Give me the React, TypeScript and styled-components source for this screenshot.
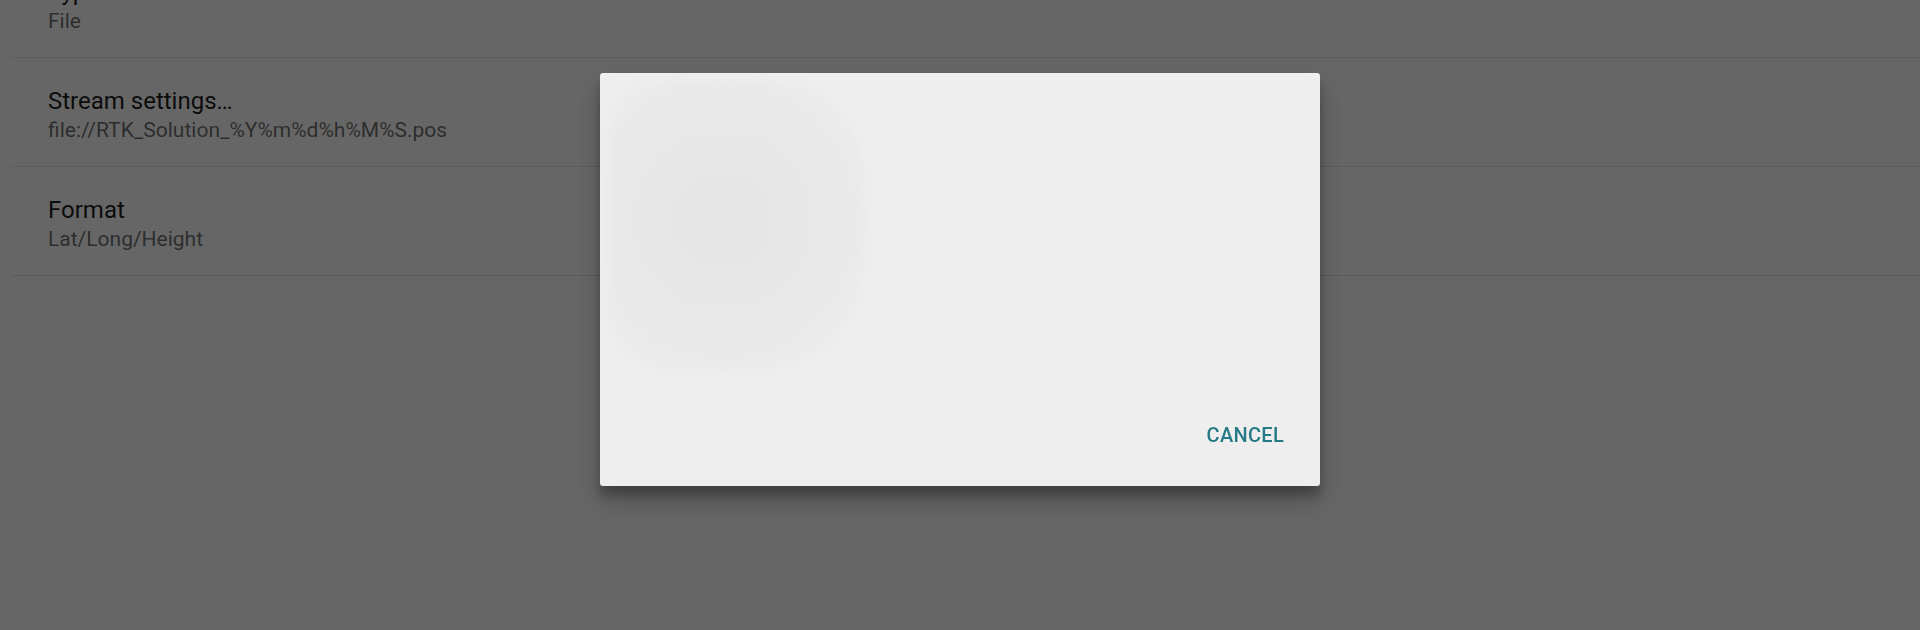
import React, { useEffect, useRef } from "react";
import styled, { createGlobalStyle } from "styled-components";

const GlobalStyle = createGlobalStyle`
  html, body {
    margin: 0;
    padding: 0;
    background: #fafafa;
    font-family: Roboto, "Noto Sans", "Liberation Sans", sans-serif;
  }
`;

const settings = [
  { title: "Type", summary: "File" },
  { title: "Stream settings…", summary: "file://RTK_Solution_%Y%m%d%h%M%S.pos" },
  { title: "Format", summary: "Lat/Long/Height" },
];

export default function App() {
  const scrollRef = useRef<HTMLDivElement>(null);

  // the list is scrolled a little, so the first row's title is cut off
  useEffect(() => {
    if (scrollRef.current) scrollRef.current.scrollTop = 51;
  }, []);

  return (
    <>
      <GlobalStyle />
      <Screen ref={scrollRef}>
        <PreferenceList>
          {settings.map((s) => (
            <PreferenceRow key={s.title}>
              <PreferenceTitle>{s.title}</PreferenceTitle>
              <PreferenceSummary>{s.summary}</PreferenceSummary>
            </PreferenceRow>
          ))}
          <Filler />
        </PreferenceList>
      </Screen>

      <Scrim>
        <Dialog>
          <DialogBody>
            <LoadingBlob />
          </DialogBody>
          <DialogActions>
            <TextButton>Cancel</TextButton>
          </DialogActions>
        </Dialog>
      </Scrim>
    </>
  );
}

const Screen = styled.div`
  height: 100vh;
  overflow: hidden;
  background: #ffffff;
`;

const PreferenceList = styled.div`
  display: flex;
  flex-direction: column;
`;

const PreferenceRow = styled.div`
  display: flex;
  flex-direction: column;
  margin-left: 12px;
  padding: 29px 0 24px 36px;
  border-bottom: 1px solid rgba(0, 0, 0, 0.1);
`;

const PreferenceTitle = styled.div`
  font-size: 24px;
  line-height: 28px;
  color: rgba(0, 0, 0, 0.9);
`;

const PreferenceSummary = styled.div`
  margin-top: 3px;
  font-size: 21px;
  line-height: 24px;
  color: rgba(0, 0, 0, 0.58);
`;

const Filler = styled.div`
  height: 600px;
`;

const Scrim = styled.div`
  position: fixed;
  inset: 0;
  background: rgba(0, 0, 0, 0.6);
  display: flex;
  justify-content: center;
  align-items: flex-start;
  padding-top: 73px;
`;

const Dialog = styled.div`
  width: 720px;
  height: 413px;
  background: #eeeeee;
  border-radius: 3px;
  box-shadow: 0 14px 28px rgba(0, 0, 0, 0.25), 0 10px 10px rgba(0, 0, 0, 0.22);
  display: flex;
  flex-direction: column;
  overflow: hidden;
`;

const DialogBody = styled.div`
  flex: 1;
  padding: 10px 0 0 8px;
`;

const LoadingBlob = styled.div`
  width: 255px;
  height: 284px;
  border-radius: 22% 35% 40% 25%;
  background: radial-gradient(
    ellipse at 45% 48%,
    #e5e5e5 0%,
    #e7e7e7 35%,
    #eae9e9 65%,
    rgba(236, 233, 233, 0.7) 85%,
    rgba(238, 238, 238, 0) 100%
  );
  filter: blur(5px);
`;

const DialogActions = styled.div`
  display: flex;
  justify-content: flex-end;
  padding: 0 20px 33px;
`;

const TextButton = styled.button`
  height: 36px;
  padding: 0 16px;
  border: none;
  background: transparent;
  font-family: Roboto, "Noto Sans", sans-serif;
  font-size: 20px;
  font-weight: 500;
  letter-spacing: 0.3px;
  text-transform: uppercase;
  color: #267987;
  cursor: pointer;
`;
